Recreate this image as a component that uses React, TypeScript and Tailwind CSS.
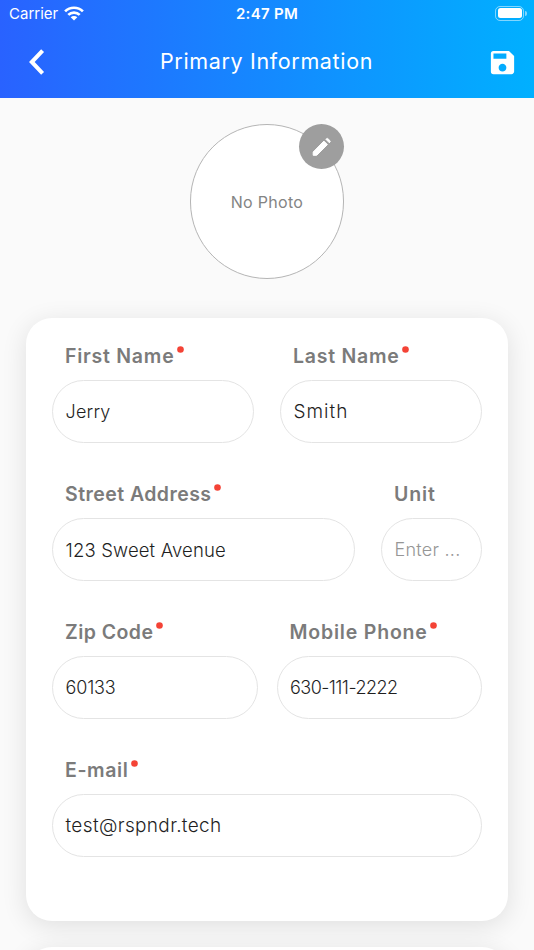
import { MdSave } from 'react-icons/md';
import clsx from 'clsx';

type FieldProps = {
  label: string;
  labelClass: string;
  value?: string;
  valueClass: string;
  placeholder?: string;
  required?: boolean;
  className?: string;
};

function Field({ label, labelClass, value, valueClass, placeholder, required, className }: FieldProps) {
  return (
    <div className={className}>
      <div className="flex h-6 items-start pl-[13px]">
        <span className={clsx('-mt-px whitespace-nowrap text-[19.5px] font-semibold leading-6 text-[#7b7b7b]', labelClass)}>
          {label}
        </span>
        {required && (
          <svg width="7" height="7" viewBox="0 0 7 7" className="ml-[2.5px] mt-[1.5px]">
            <circle cx="3.5" cy="3.5" r="3.3" fill="#f44336" />
          </svg>
        )}
      </div>
      <div className="mt-[11px] flex h-[63px] items-center rounded-full border border-[#e4e4e4] pl-[12.5px] pt-[2px]">
        <span
          className={clsx(
            'whitespace-nowrap font-light leading-6',
            value ? 'text-[#1f1f1f]' : 'text-[#969696]',
            valueClass
          )}
        >
          {value ?? placeholder}
        </span>
      </div>
    </div>
  );
}

function StatusBar() {
  return (
    <div className="grid h-[26px] grid-cols-3 items-center px-[9px] pt-[2px]">
      <div className="flex items-center gap-[6px]">
        <span className="text-[15px] leading-5">Carrier</span>
        <svg width="20" height="15" viewBox="0 0 20 15" className="-mt-[2px]">
          <g fill="none" stroke="white" strokeWidth="2.7">
            <path d="M1.1 5.4a12.7 12.7 0 0 1 17.8 0" />
            <path d="M4.3 8.9a8.1 8.1 0 0 1 11.4 0" />
          </g>
          <path d="M6.7 11.3a4.7 4.7 0 0 1 6.6 0L10 14.6z" fill="white" />
        </svg>
      </div>
      <span className="text-center text-[15px] font-semibold leading-5 tracking-[0.3px]">2:47 PM</span>
      <div className="-mr-[2px] -mt-[2px] flex items-center justify-end gap-px">
        <div className="h-[15px] w-[29px] rounded-[5px] border border-white/50 p-[1.5px]">
          <div className="h-full rounded-[2.5px] bg-white" />
        </div>
        <div className="h-[5px] w-[2px] rounded-r-full bg-white/50" />
      </div>
    </div>
  );
}

export default function App() {
  return (
    <div className="h-[950px] w-[534px] overflow-hidden bg-[#fafafa] font-['Inter',sans-serif]">
      <header className="h-[98px] bg-linear-[90deg,#2962ff,#00b0ff] text-white">
        <StatusBar />
        <div className="flex h-[72px] items-center justify-between pl-[28px] pr-[16px]">
          <svg width="18" height="26" viewBox="0 0 18 26">
            <path d="M14.6 1.6 3.8 13 14.6 24.4" fill="none" stroke="white" strokeWidth="4" />
          </svg>
          <h1 className="-mt-[2px] text-[21.5px] leading-6 tracking-[0.65px]">Primary Information</h1>
          <MdSave size={31} />
        </div>
      </header>

      <main className="px-[26px] pt-[26px]">
        <div className="relative mx-auto flex h-[155px] w-[154px] items-center justify-center rounded-full border border-[#b5b5b5] bg-white">
          <span className="text-[16px] tracking-[0.3px] text-[#848484]">No Photo</span>
          <button className="absolute -right-px -top-px size-[45px] rounded-full bg-[#9e9e9e]">
            <svg width="45" height="45" viewBox="0 0 45 45" fill="white" stroke="white" strokeLinejoin="round">
              <path d="M14.2 28V31.3H17.7L28.4 20.6 24.9 17.1z" />
              <path d="M26.8 15.2 28.6 14.4 31.3 17 30.4 18.8z" />
            </svg>
          </button>
        </div>

        <section className="mt-[38.5px] flex h-[603.5px] flex-col gap-[40px] rounded-[26px] bg-white px-[26px] pt-[27px] shadow-[0_5px_26px_rgba(0,0,0,0.11)]">
          <div className="grid grid-cols-2 gap-[26px]">
            <Field label="First Name" labelClass="tracking-[0.75px]" value="Jerry" valueClass="text-[18px] tracking-[0.2px]" required />
            <Field label="Last Name" labelClass="tracking-[0.75px]" value="Smith" valueClass="text-[19px] tracking-[1px]" required />
          </div>
          <div className="flex gap-[26px]">
            <Field className="w-[303px]" label="Street Address" labelClass="tracking-[0.45px]" value="123 Sweet Avenue" valueClass="text-[18.5px] tracking-[0.15px]" required />
            <Field className="w-[101px]" label="Unit" labelClass="tracking-[0.9px]" placeholder="Enter ..." valueClass="text-[18px] tracking-[0.25px]" />
          </div>
          <div className="grid grid-cols-2 gap-[19px]">
            <Field label="Zip Code" labelClass="tracking-[0.45px]" value="60133" valueClass="text-[18px] tracking-[-0.15px]" required />
            <Field label="Mobile Phone" labelClass="tracking-[0.8px]" value="630-111-2222" valueClass="text-[18px] tracking-[-0.55px]" required />
          </div>
          <Field label="E-mail" labelClass="tracking-[0.6px]" value="test@rspndr.tech" valueClass="text-[19px] tracking-[0.35px]" required />
        </section>

        <section className="mt-[26px] h-40 rounded-[26px] bg-white shadow-[0_5px_26px_rgba(0,0,0,0.11)]" />
      </main>
    </div>
  );
}
